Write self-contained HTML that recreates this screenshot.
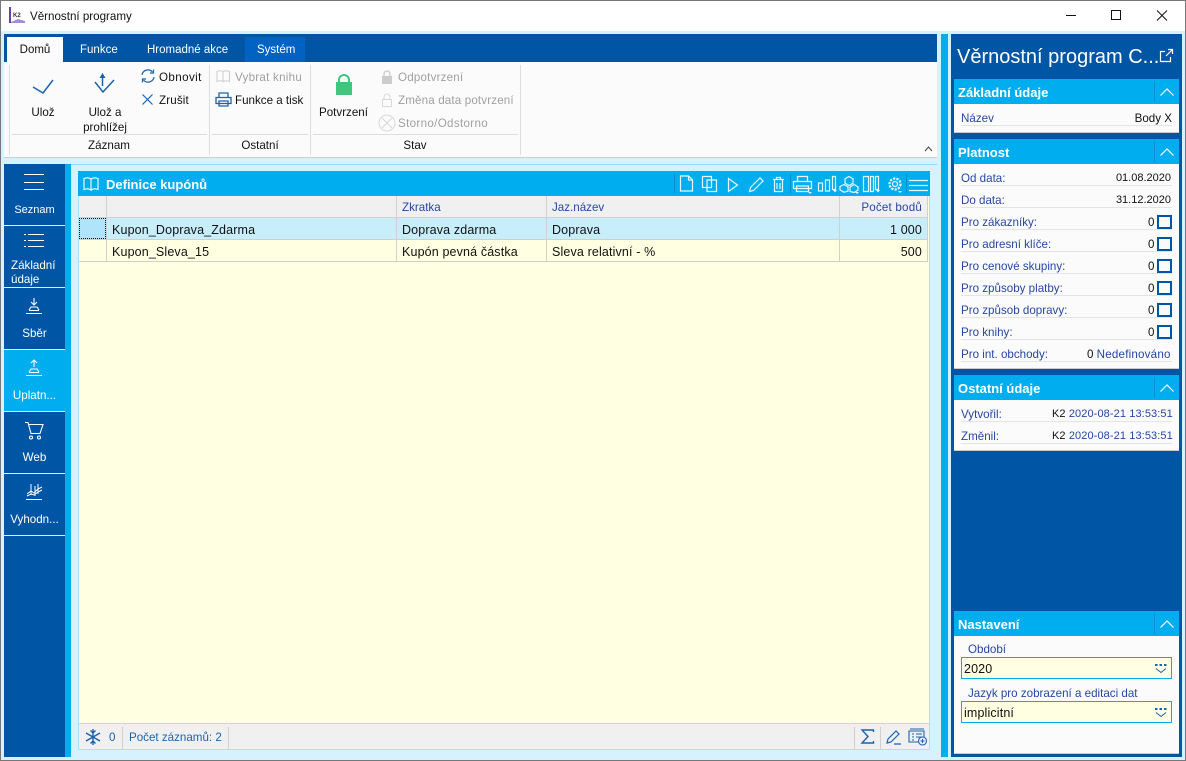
<!DOCTYPE html>
<html><head><meta charset="utf-8">
<style>
html,body{margin:0;padding:0}
body{width:1186px;height:761px;overflow:hidden;position:relative;background:#d6f1ff;font-family:"Liberation Sans",sans-serif;font-size:12px;color:#111}
.a,.t{position:absolute}
.t{white-space:nowrap;line-height:16px;font-size:11.6px;margin-top:1px}
.d{font-size:12.5px;letter-spacing:.14px;margin-top:0}
.n{font-size:11px;margin-top:0}
.c{text-align:center}
.r{text-align:right}
.w{color:#fff}
.b{color:#2646a6}
.g{color:#a0a0a0}
.h{font-weight:bold;color:#fff;font-size:13px;margin-top:0}
svg{position:absolute;overflow:visible;fill:none}
.nv{position:absolute;left:4px;width:61px;background:#0055a5;color:#fff}
.ln{position:absolute;height:1px;background:#e4e4e4;left:961px;width:211px}
.cb{position:absolute;left:1157px;width:11px;height:10px;border:2px solid #0055a5;background:#fafafa}
.sec{position:absolute;left:954px;width:225px;background:#fbfbfb;border-bottom:1px solid #ccc}
.sh{position:absolute;left:954px;width:225px;height:25px;background:#00aeef}
.sh i{position:absolute;left:200px;top:2px;width:1px;height:21px;background:#0a8fcf}
.sh svg{left:206px;top:9px}
.sv{position:absolute;height:22px;width:1px;background:#d0d0d0}
.tab{font-size:11.5px;margin-top:0}
</style></head><body>
<!-- window frame -->
<div class="a" style="left:0;top:0;width:1186px;height:31px;background:#fff"></div>
<div class="a" style="left:0;top:0;width:1186px;height:1px;background:#777"></div>
<div class="a" style="left:0;top:0;width:1px;height:761px;background:#777"></div>
<div class="a" style="left:1185px;top:0;width:1px;height:761px;background:#777"></div>
<div class="a" style="left:0;top:760px;width:1186px;height:1px;background:#777"></div>
<!-- logo -->
<svg style="left:9px;top:7px" width="17" height="17"><rect x="0" y="0" width="2" height="16" fill="#6a3fb0"/><path d="M2 16h14v-2l-7-2-7 3z" fill="#a58ad8"/><text x="4" y="10" font-size="6" font-weight="bold" fill="#333" font-family="Liberation Sans">K2</text></svg>
<div class="t" style="left:30px;top:8px;color:#111">Věrnostní programy</div>
<!-- window buttons -->
<svg style="left:1066px;top:10px" width="102" height="12" stroke="#111" stroke-width="1"><path d="M0 5.500h10M45.500 .5h9v9h-9zM91 .5l10 10M101 .5l-10 10"/></svg>
<!-- ribbon -->
<div class="a" style="left:4px;top:34px;width:933px;height:28px;background:#0055a5"></div>
<div class="a" style="left:7px;top:37px;width:56px;height:25px;background:#fbfbfb"></div>
<div class="a" style="left:245px;top:37px;width:60px;height:25px;background:#0063c4"></div>
<div class="t c tab" style="left:7px;top:42px;width:56px;color:#111">Domů</div>
<div class="t w tab" style="left:80px;top:42px">Funkce</div>
<div class="t w tab" style="left:147px;top:42px">Hromadné akce</div>
<div class="t w tab" style="left:257px;top:42px">Systém</div>
<div class="a" style="left:4px;top:62px;width:933px;height:95px;background:#fbfbfb;border-bottom:1px solid #ccc"></div>
<div class="a" style="left:9px;top:65px;width:1px;height:90px;background:#ddd"></div>
<div class="a" style="left:209px;top:65px;width:1px;height:90px;background:#ddd"></div>
<div class="a" style="left:310px;top:65px;width:1px;height:90px;background:#ddd"></div>
<div class="a" style="left:520px;top:65px;width:1px;height:90px;background:#ddd"></div>
<div class="a" style="left:12px;top:134px;width:195px;height:1px;background:#ddd"></div>
<div class="a" style="left:212px;top:134px;width:96px;height:1px;background:#ddd"></div>
<div class="a" style="left:313px;top:134px;width:205px;height:1px;background:#ddd"></div>
<!-- ribbon icons -->
<svg style="left:32px;top:79px" width="22" height="16" stroke="#1b62ae" stroke-width="1.500"><path d="M1 8L11 14L21 1"/></svg>
<svg style="left:94px;top:72px" width="22" height="24" stroke="#1b62ae" stroke-width="1.500"><path d="M1 10L9 20L20 8M8.500 5V14"/><path d="M8.500 1l-3 5h6z" fill="#1b62ae" stroke="none"/></svg>
<svg style="left:141px;top:69px" width="14" height="14" stroke="#1b62ae" stroke-width="1.200"><path d="M1 6A6 6 0 0 1 11.500 3M13 8a6 6 0 0 1-10.500 3"/><path d="M12.500 .5v3.500H9M1.500 13.500V10H5"/></svg>
<svg style="left:142px;top:94px" width="12" height="12" stroke="#1b62ae" stroke-width="1.200"><path d="M.5.5l10 10M10.500 .5l-10 10"/></svg>
<svg style="left:216px;top:70px" width="15" height="13" stroke="#cfcfcf" stroke-width="1.100"><path d="M1 1.500c2-1 4-1 6 0v10c-2-1-4-1-6 0zM7 1.500c2-1 4-1 6.500 0v10c-2.500-1-4.500-1-6.500 0z"/></svg>
<svg style="left:215px;top:92px" width="17" height="15" stroke="#1b62ae" stroke-width="1.300"><path d="M4 5V1h9v4M1 5.500h15v6H1zM4 9h9v5H4z"/></svg>
<svg style="left:335px;top:74px" width="18" height="22"><path d="M4 9V6a5 5 0 0 1 10 0v3" stroke="#3fc67c" stroke-width="2"/><rect x="1" y="8" width="16" height="13" fill="#3fc67c"/></svg>
<svg style="left:381px;top:70px" width="12" height="14"><path d="M3 6V4a3 3 0 0 1 6 0v2" stroke="#ccc" stroke-width="1.300"/><rect x="1" y="6" width="10" height="8" fill="#ccc"/></svg>
<svg style="left:381px;top:93px" width="12" height="14" stroke="#d8d8d8" stroke-width="1"><path d="M3 6V4a3 3 0 0 1 6 0v2M1.500 6.500h9v7h-9z"/></svg>
<svg style="left:378px;top:114px" width="18" height="18" stroke="#d8d8d8" stroke-width="1"><circle cx="9" cy="9" r="8"/><path d="M4 4l10 10M14 4L4 14"/></svg>
<!-- ribbon text -->
<div class="t c" style="left:22px;top:104px;width:42px">Ulož</div>
<div class="t c" style="left:75px;top:104px;width:60px">Ulož a</div>
<div class="t c" style="left:75px;top:119px;width:60px">prohlížej</div>
<div class="t" style="left:159px;top:69px;letter-spacing:.4px">Obnovit</div>
<div class="t" style="left:159px;top:92px;letter-spacing:.15px">Zrušit</div>
<div class="t g" style="left:235px;top:69px;letter-spacing:.25px">Vybrat knihu</div>
<div class="t" style="left:235px;top:92px">Funkce a tisk</div>
<div class="t" style="left:319px;top:104px">Potvrzení</div>
<div class="t g" style="left:398px;top:69px;letter-spacing:.2px">Odpotvrzení</div>
<div class="t g" style="left:398px;top:92px;letter-spacing:.15px">Změna data potvrzení</div>
<div class="t g" style="left:398px;top:115px;letter-spacing:.33px">Storno/Odstorno</div>
<div class="t c" style="left:10px;top:137px;width:198px">Záznam</div>
<div class="t c" style="left:210px;top:137px;width:100px">Ostatní</div>
<div class="t c" style="left:311px;top:137px;width:208px">Stav</div>
<svg style="left:924px;top:146px" width="9" height="6" stroke="#444" stroke-width="1"><path d="M1 5l3.500-4L8 5"/></svg>
<!-- left nav -->
<div class="a" style="left:65px;top:164px;width:6px;height:593px;background:#00aeef"></div>
<div class="a" style="left:71px;top:164px;width:866px;height:1px;background:#8fdcff"></div>
<div class="nv" style="top:164px;height:61px"></div>
<div class="nv" style="top:226px;height:61px"></div>
<div class="nv" style="top:288px;height:61px"></div>
<div class="nv" style="top:350px;height:61px;background:#00aeef"></div>
<div class="nv" style="top:412px;height:61px"></div>
<div class="nv" style="top:474px;height:61px"></div>
<div class="nv" style="top:536px;height:221px"></div>
<svg style="left:24px;top:174px" width="20" height="17" stroke="#fff" stroke-width="1"><path d="M0 .5h20M0 8.500h20M0 15.500h20"/></svg>
<svg style="left:24px;top:234px" width="20" height="14" stroke="#fff" stroke-width="1"><path d="M4 .5h16M4 6.500h16M4 12.500h16M0 .5h2M0 6.500h2M0 12.500h2"/></svg>
<svg style="left:26px;top:298px" width="16" height="17" stroke="#fff" stroke-width="1.100"><path d="M8 0v6M5 4l3 3 3-3M3 12l2-3h6l2 3M3 12.500h10M0 15.500h16"/></svg>
<svg style="left:26px;top:360px" width="16" height="17" stroke="#fff" stroke-width="1.100"><path d="M8 7V1M5 3l3-3 3 3M3 12l2-3h6l2 3M3 12.500h10M0 15.500h16"/></svg>
<svg style="left:24px;top:422px" width="20" height="18" stroke="#fff" stroke-width="1.100"><path d="M1 .5h3l3 11h9l3-9H5"/><circle cx="7" cy="15.500" r="1.500"/><circle cx="15" cy="15.500" r="1.500"/></svg>
<svg style="left:26px;top:483px" width="17" height="18" stroke="#fff" stroke-width="1"><path d="M1 11l4-3 3 2 4-4 4-2M1 13l4-2 3 1 4-3 4-2M5 1v11M9 3v10M12 1v10M0 16.500h16"/></svg>
<div class="t w c" style="left:4px;top:201px;width:61px;font-size:11px">Seznam</div>
<div class="t w" style="left:11px;top:257px">Základní</div>
<div class="t w" style="left:11px;top:271px">údaje</div>
<div class="t w c" style="left:4px;top:325px;width:61px">Sběr</div>
<div class="t w c" style="left:4px;top:387px;width:61px">Uplatn...</div>
<div class="t w c" style="left:4px;top:449px;width:61px">Web</div>
<div class="t w c" style="left:4px;top:511px;width:61px">Vyhodn...</div>
<!-- main panel -->
<div class="a" style="left:78px;top:171px;width:852px;height:25px;background:#00aeef"></div>
<div class="a" style="left:78px;top:196px;width:850px;height:554px;background:#ffffe1;border:1px solid #a5e2fb;border-top:0;border-bottom:0"></div>
<svg style="left:83px;top:177px" width="18" height="15" stroke="#fff" stroke-width="1.100"><path d="M1 1.500c2.500-1 5-1 7 .5v11c-2-1.500-4.500-1.500-7-.5zM8 2c2-1.500 4.500-1.500 7-.5v11c-2.500-1-5-1-7 .5z"/></svg>
<div class="t h" style="left:106px;top:177px">Definice kupónů</div>
<!-- toolbar icons -->
<svg style="left:680px;top:175px" width="250" height="18" stroke="#e8f8ff" stroke-width="1.200">
<path d="M.5 1h8l4 4v11H.5zM8.500 1v4h4"/>
<path d="M22.500 1.500h9v11h-9zM27 5h9.500v11.500H27z" />
<path d="M48.500 3.500l9 6.500-9 6.500z"/>
<path d="M69.500 16.500l1-4 9.500-9.500 3 3-9.500 9.500z"/>
<path d="M93 4.500h11M94.500 5v11.500h8V5M96.500 4.500V2.500h4v2M97 8v6M100 8v6"/>
<path d="M117.500 6V1.500h10V6M113.500 6.500h18v7h-18zM116.500 11h12v5.500h-12z" stroke-width="1.300"/>
<path d="M138.500 8h4v8h-4zM145.500 5h4v11h-4zM152.500 1.500h3v13h-3z"/>
<path d="M169 1.500l4 2.300v4.400l-4 2.300-4-2.300V3.800zM164 9.500l4 2.300v4.400l-4 1-4-2.300v-3.400zM174 9.500l4 2.300v3.400l-4 2.300-4-1v-4.400z"/>
<path d="M183.500 1.500h5v15h-5zM190.500 1.500h3v15h-3zM195.500 1.500h3v13h-3z"/>
<circle cx="215" cy="9" r="5.500" stroke-width="2.200" stroke-dasharray="2.200 1.200"/><circle cx="215" cy="9" r="2.500"/>
<path d="M229 5.500h19M229 10.500h19M229 15.500h19"/>
<path d="M128 17l4 0-2 2zM153 15h4l-2 2.500zM175 17h4l-2 2zM196 15h4l-2 2.500zM218 16h4l-2 2z" fill="#e8f8ff" stroke="none"/>
</svg>
<div class="a" style="left:674px;top:174px;width:1px;height:19px;background:#0a8fcf"></div>
<div class="a" style="left:790px;top:174px;width:1px;height:19px;background:#0a8fcf"></div>
<div class="a" style="left:906px;top:174px;width:1px;height:19px;background:#0a8fcf"></div>
<!-- table -->
<div class="a" style="left:79px;top:196px;width:849px;height:21px;background:#f0f0f0;border-bottom:1px solid #d0d0d0"></div>
<div class="a" style="left:79px;top:218px;width:849px;height:21px;background:#c8eefc;border-bottom:1px solid #d0d0d0"></div>
<div class="a" style="left:79px;top:240px;width:849px;height:21px;background:#ffffe1;border-bottom:1px solid #d0d0d0"></div>
<div class="a" style="left:79px;top:218px;width:25px;height:19px;background:#b0e4fb;border:1px dotted #111"></div>
<div class="a" style="left:106px;top:196px;width:1px;height:66px;background:#d0d0d0"></div>
<div class="a" style="left:396px;top:196px;width:1px;height:66px;background:#d0d0d0"></div>
<div class="a" style="left:546px;top:196px;width:1px;height:66px;background:#d0d0d0"></div>
<div class="a" style="left:839px;top:196px;width:1px;height:66px;background:#d0d0d0"></div>
<div class="a" style="left:927px;top:196px;width:1px;height:66px;background:#d0d0d0"></div>
<div class="t b" style="left:402px;top:199px">Zkratka</div>
<div class="t b" style="left:552px;top:199px">Jaz.název</div>
<div class="t b r" style="left:840px;top:199px;width:82px;letter-spacing:.2px">Počet bodů</div>
<div class="t d" style="left:112px;top:222px">Kupon_Doprava_Zdarma</div>
<div class="t d" style="left:402px;top:222px">Doprava zdarma</div>
<div class="t d" style="left:552px;top:222px">Doprava</div>
<div class="t r d" style="left:840px;top:222px;width:82px">1 000</div>
<div class="t d" style="left:112px;top:244px">Kupon_Sleva_15</div>
<div class="t d" style="left:402px;top:244px">Kupón pevná částka</div>
<div class="t d" style="left:552px;top:244px">Sleva relativní - %</div>
<div class="t r d" style="left:840px;top:244px;width:82px">500</div>
<!-- status bar -->
<div class="a" style="left:78px;top:723px;width:852px;height:27px;background:#f0f0f0;border:1px solid #a5e2fb;box-sizing:border-box"></div>
<div class="sv" style="left:122px;top:727px"></div>
<div class="sv" style="left:228px;top:727px"></div>
<div class="sv" style="left:854px;top:727px"></div>
<div class="sv" style="left:880px;top:727px"></div>
<svg style="left:85px;top:729px" width="16" height="16" stroke="#1b62ae" stroke-width="1.400"><path d="M8 0v16M1 4l14 8M15 4L1 12M5.500 1.500L8 4l2.500-2.500M5.500 14.500L8 12l2.500 2.500"/></svg>
<div class="t" style="left:109px;top:729px;color:#1b62ae">0</div>
<div class="t" style="left:129px;top:729px;color:#1b62ae">Počet záznamů: 2</div>
<svg style="left:861px;top:729px" width="13" height="15" stroke="#1b62ae" stroke-width="1.400"><path d="M12.500 3V1H1l6 6.500L1 14h11.500v-2"/></svg>
<svg style="left:886px;top:729px" width="16" height="16" stroke="#1b62ae" stroke-width="1.200"><path d="M1 14l1-4 8-8 3 3-8 8zM8 15h7"/></svg>
<svg style="left:908px;top:727px" width="20" height="19" stroke="#1b62ae" stroke-width="1.100"><path d="M2 2h14M1 4h15v11H1zM4 7h2M8 7h6M4 10h2M8 10h6M4 13h2"/><circle cx="14.500" cy="14" r="4" fill="#f0f0f0"/><path d="M14.500 12v4M12.500 14h4"/></svg>
<!-- right side -->
<div class="a" style="left:941px;top:34px;width:7px;height:723px;background:#00aeef"></div>
<div class="a" style="left:951px;top:34px;width:231px;height:723px;background:#0055a5"></div>
<svg style="left:943px;top:381px" width="4" height="24" fill="#9fdcf8"><circle cx="2" cy="3" r="1.800"/><circle cx="2" cy="12" r="1.800"/><circle cx="2" cy="21" r="1.800"/></svg>
<div class="t w" style="left:957px;top:45px;font-size:20px;line-height:24px;margin-top:0">Věrnostní program C...</div>
<svg style="left:1160px;top:49px" width="13" height="13" stroke="#fff" stroke-width="1.200"><path d="M8 .5h4.500V5M12.500 .5L6 7M5 2.500H.5v10h10V8"/></svg>
<div class="sh" style="top:79px"><i></i><svg width="14" height="8" stroke="#fff" stroke-width="1.200"><path d="M.5 7.500L7 1l6.500 6.500"/></svg></div>
<div class="t h" style="left:958px;top:85px">Základní údaje</div>
<div class="sec" style="top:104px;height:28px"></div>
<div class="sh" style="top:139px"><i></i><svg width="14" height="8" stroke="#fff" stroke-width="1.200"><path d="M.5 7.500L7 1l6.500 6.500"/></svg></div>
<div class="t h" style="left:958px;top:145px">Platnost</div>
<div class="sec" style="top:164px;height:204px"></div>
<div class="sh" style="top:375px"><i></i><svg width="14" height="8" stroke="#fff" stroke-width="1.200"><path d="M.5 7.500L7 1l6.500 6.500"/></svg></div>
<div class="t h" style="left:958px;top:381px">Ostatní údaje</div>
<div class="sec" style="top:400px;height:50px"></div>
<div class="sh" style="top:611px"><i></i><svg width="14" height="8" stroke="#fff" stroke-width="1.200"><path d="M.5 7.500L7 1l6.500 6.500"/></svg></div>
<div class="t h" style="left:958px;top:617px">Nastavení</div>
<div class="sec" style="top:636px;height:117px"></div>
<!-- rows -->
<div class="ln" style="top:125px"></div>
<div class="ln" style="top:185px"></div><div class="ln" style="top:207px"></div><div class="ln" style="top:229px"></div><div class="ln" style="top:251px"></div><div class="ln" style="top:273px"></div><div class="ln" style="top:295px"></div><div class="ln" style="top:317px"></div><div class="ln" style="top:339px"></div><div class="ln" style="top:361px"></div>
<div class="ln" style="top:421px"></div><div class="ln" style="top:443px"></div>
<div class="t b" style="left:961px;top:110px">Název</div>
<div class="t r" style="left:1060px;top:110px;width:112px">Body X</div>
<div class="t b" style="left:961px;top:170px">Od data:</div><div class="t r n" style="left:1059px;top:170px;width:112px">01.08.2020</div>
<div class="t b" style="left:961px;top:192px">Do data:</div><div class="t r n" style="left:1059px;top:192px;width:112px">31.12.2020</div>
<div class="t b" style="left:961px;top:214px">Pro zákazníky:</div><div class="t" style="left:1148px;top:214px">0</div><div class="cb" style="top:215px"></div>
<div class="t b" style="left:961px;top:236px">Pro adresní klíče:</div><div class="t" style="left:1148px;top:236px">0</div><div class="cb" style="top:237px"></div>
<div class="t b" style="left:961px;top:258px">Pro cenové skupiny:</div><div class="t" style="left:1148px;top:258px">0</div><div class="cb" style="top:259px"></div>
<div class="t b" style="left:961px;top:280px">Pro způsoby platby:</div><div class="t" style="left:1148px;top:280px">0</div><div class="cb" style="top:281px"></div>
<div class="t b" style="left:961px;top:302px">Pro způsob dopravy:</div><div class="t" style="left:1148px;top:302px">0</div><div class="cb" style="top:303px"></div>
<div class="t b" style="left:961px;top:324px">Pro knihy:</div><div class="t" style="left:1148px;top:324px">0</div><div class="cb" style="top:325px"></div>
<div class="t b" style="left:961px;top:346px">Pro int. obchody:</div><div class="t" style="left:1087px;top:346px">0 <span class="b" style="letter-spacing:.2px">Nedefinováno</span></div>
<div class="t b" style="left:961px;top:406px">Vytvořil:</div><div class="t n" style="left:1052px;top:406px;letter-spacing:.1px">K2 <span class="b">2020-08-21 13:53:51</span></div>
<div class="t b" style="left:961px;top:428px">Změnil:</div><div class="t n" style="left:1052px;top:428px;letter-spacing:.1px">K2 <span class="b">2020-08-21 13:53:51</span></div>
<div class="t b" style="left:968px;top:641px">Období</div>
<div class="a" style="left:961px;top:657px;width:209px;height:20px;background:#ffffe1;border:1px solid #00aeef"></div>
<div class="t d" style="left:964px;top:661px">2020</div>
<div class="t b" style="left:968px;top:685px">Jazyk pro zobrazení a editaci dat</div>
<div class="a" style="left:961px;top:701px;width:209px;height:20px;background:#ffffe1;border:1px solid #00aeef"></div>
<div class="t d" style="left:964px;top:705px">implicitní</div>
<svg style="left:1154px;top:663px" width="14" height="11" stroke="#1b62ae" stroke-width="1"><rect x="1" y="1" width="2.500" height="2" fill="#1b62ae" stroke="none"/><rect x="5.500" y="1" width="2.500" height="2" fill="#1b62ae" stroke="none"/><rect x="10" y="1" width="2.500" height="2" fill="#1b62ae" stroke="none"/><path d="M2 5.500l5 4 5-4"/></svg>
<svg style="left:1154px;top:707px" width="14" height="11" stroke="#1b62ae" stroke-width="1"><rect x="1" y="1" width="2.500" height="2" fill="#1b62ae" stroke="none"/><rect x="5.500" y="1" width="2.500" height="2" fill="#1b62ae" stroke="none"/><rect x="10" y="1" width="2.500" height="2" fill="#1b62ae" stroke="none"/><path d="M2 5.500l5 4 5-4"/></svg>
</body></html>
